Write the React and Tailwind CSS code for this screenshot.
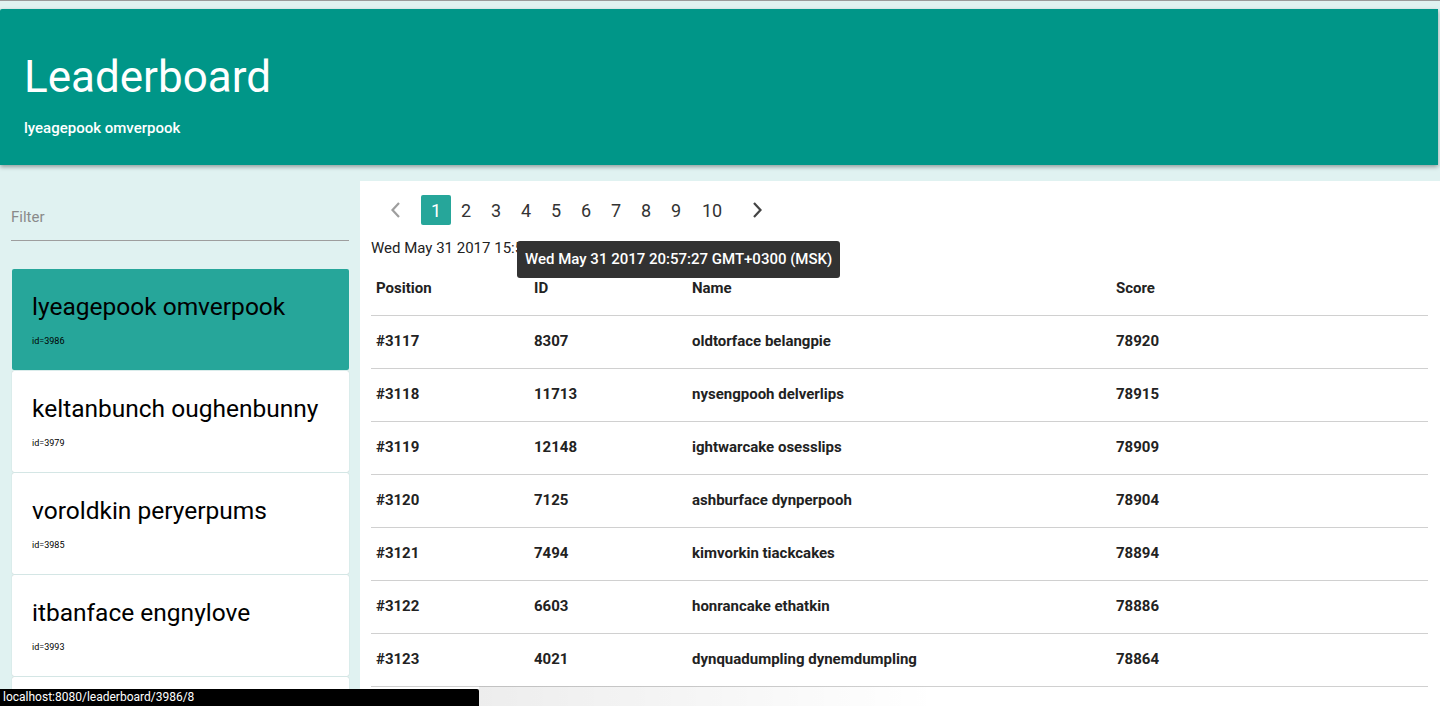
import React from "react";

const players = [
  { name: "lyeagepook omverpook", id: 3986 },
  { name: "keltanbunch oughenbunny", id: 3979 },
  { name: "voroldkin peryerpums", id: 3985 },
  { name: "itbanface engnylove", id: 3993 },
  { name: "oldtorface belangpie", id: 3990 },
];

const rows = [
  ["#3117", "8307", "oldtorface belangpie", "78920"],
  ["#3118", "11713", "nysengpooh delverlips", "78915"],
  ["#3119", "12148", "ightwarcake osesslips", "78909"],
  ["#3120", "7125", "ashburface dynperpooh", "78904"],
  ["#3121", "7494", "kimvorkin tiackcakes", "78894"],
  ["#3122", "6603", "honrancake ethatkin", "78886"],
  ["#3123", "4021", "dynquadumpling dynemdumpling", "78864"],
  ["#3124", "9022", "ormfunk engyerpie", "78860"],
];

const pages = [1, 2, 3, 4, 5, 6, 7, 8, 9, 10];

function Chevron({ dir, className }) {
  return (
    <svg width="14" height="18" viewBox="0 0 14 18" className={className}>
      {dir === "left" ? (
        <path d="M10 2 3.5 9 10 16" fill="none" stroke="currentColor" strokeWidth="2.2" />
      ) : (
        <path d="M4 2 10.5 9 4 16" fill="none" stroke="currentColor" strokeWidth="2.2" />
      )}
    </svg>
  );
}

class App extends React.Component {
  render() {
    return (
      <div
        className="relative h-[706px] w-[1440px] overflow-hidden bg-[#e0f2f1]"
        style={{ fontFamily: "Roboto, 'Noto Sans', sans-serif" }}
      >
        <div className="h-[1px] bg-[#9a9a9a]"></div>
        <div className="mt-[8px] mr-[2px] h-[156px] rounded-tl-[2px] bg-[#009688] pl-[24px] pt-[42px] text-white shadow-[0_2px_4px_rgba(0,0,0,0.35)]">
          <h1 className="text-[44px] leading-[52px] font-normal">Leaderboard</h1>
          <div className="mt-[16px] text-[15px] font-medium leading-[18px]">lyeagepook omverpook</div>
        </div>

        <div className="mt-[16px] flex">
          {/* sidebar */}
          <div className="w-[360px] shrink-0 px-[11px]">
            <div className="pt-[26px]">
              <div className="pb-[13px] text-[15px] leading-[20px] text-[#8a8a8a]">Filter</div>
              <div className="h-[1px] bg-[#9e9e9e]"></div>
            </div>
            <div className="mt-[28px] ml-[1px] flex flex-col gap-[1px]">
              {players.map((p, i) => (
                <div
                  key={p.id}
                  className={
                    "h-[101px] rounded-[2px] pl-[20px] pt-[24px] text-black " +
                    (i === 0 ? "bg-[#26a69a]" : "bg-white shadow-[0_0_1px_rgba(0,0,0,0.25)]")
                  }
                >
                  <div className="text-[24.5px] leading-[28px]">{p.name}</div>
                  <div className="mt-[14px] text-[9px] leading-[12px]">id={p.id}</div>
                </div>
              ))}
            </div>
          </div>

          {/* main panel */}
          <div className="relative h-[540px] flex-1 bg-white pl-[11px] pr-[12px]">
            <div className="flex h-[58px] items-center pl-[18px] text-[18px] text-[#333]">
              <Chevron dir="left" className="mr-[18px] text-[#9e9e9e]" />
              {pages.map((n) => (
                <div
                  key={n}
                  className={
                    "flex h-[30px] items-center justify-center " +
                    (n === 1 ? "w-[30px] rounded-[2px] bg-[#26a69a] text-white" : n === 10 ? "ml-[6px] w-[30px]" : "w-[30px]")
                  }
                >
                  {n}
                </div>
              ))}
              <Chevron dir="right" className="ml-[23px] text-[#444]" />
            </div>

            <div className="mt-[2px] text-[15px] leading-[15px] text-[#222]">Wed May 31 2017 15:57:27 GMT+0300 (MSK)</div>

            <div className="absolute left-[157px] top-[60px] rounded-[3px] bg-[#323232] px-[8px] py-[10px] text-[15px] font-medium leading-[17px] text-white">
              Wed May 31 2017 20:57:27 GMT+0300 (MSK)
            </div>

            <table className="mt-[6px] w-full border-collapse text-left text-[15px] text-[#222]">
              <thead>
                <tr className="h-[53px] border-b border-[#d0d0d0]">
                  <th className="w-[158px] pl-[5px] font-bold">Position</th>
                  <th className="w-[158px] pl-[5px] font-bold">ID</th>
                  <th className="w-[424px] pl-[5px] font-bold">Name</th>
                  <th className="pl-[5px] font-bold">Score</th>
                </tr>
              </thead>
              <tbody>
                {rows.map((r) => (
                  <tr key={r[0]} className="h-[53px] border-b border-[#d0d0d0] font-bold">
                    <td className="pl-[5px]">{r[0]}</td>
                    <td className="pl-[5px]">{r[1]}</td>
                    <td className="pl-[5px]">{r[2]}</td>
                    <td className="pl-[5px]">{r[3]}</td>
                  </tr>
                ))}
              </tbody>
            </table>
          </div>
        </div>

        {/* browser status bar */}
        <div className="absolute bottom-0 left-[479px] h-[20px] w-[460px] bg-gradient-to-r from-[rgba(0,0,0,0.07)] to-transparent"></div>
        <div className="absolute bottom-0 left-0 h-[17px] w-[479px] rounded-tr-[2px] bg-black pl-[3px] text-[12px] leading-[17px] text-white">
          localhost:8080/leaderboard/3986/8
        </div>
      </div>
    );
  }
}

export default App;
